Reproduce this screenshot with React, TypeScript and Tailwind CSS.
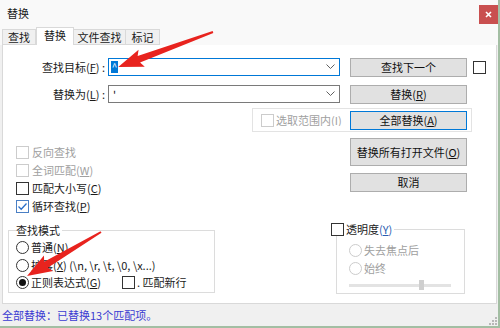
import React from "react";

function Acc({ c }: { c: string }) {
  return (
    <span>
      (<span className="underline">{c}</span>)
    </span>
  );
}

function Check({ checked = false, disabled = false }: { checked?: boolean; disabled?: boolean }) {
  return (
    <span
      className={
        "inline-flex shrink-0 w-[13px] h-[13px] bg-white border items-center justify-center " +
        (disabled ? "border-[#cccccc]" : checked ? "border-[#4a7fc4]" : "border-[#333333]")
      }
    >
      {checked && (
        <svg width="11" height="11" viewBox="0 0 11 11">
          <polyline points="1.5,5.5 4.2,8.2 9.5,2.5" fill="none" stroke="#2a6fc9" strokeWidth="1.3" />
        </svg>
      )}
    </span>
  );
}

function Radio({ on = false, disabled = false }: { on?: boolean; disabled?: boolean }) {
  return (
    <span
      className={
        "inline-flex shrink-0 w-[13px] h-[13px] rounded-full bg-white border items-center justify-center " +
        (disabled ? "border-[#cccccc]" : "border-[#333333]")
      }
    >
      {on && <span className="w-[7px] h-[7px] rounded-full bg-[#111111]" />}
    </span>
  );
}

function Btn({ children, focused = false, tall = false }: { children: React.ReactNode; focused?: boolean; tall?: boolean }) {
  return (
    <div
      className={
        "w-[117px] shrink-0 bg-[#e1e1e1] border flex items-center justify-center text-[#111111] " +
        (tall ? "h-[28px] " : "h-[19px] ") +
        (focused ? "border-[#0078d7]" : "border-[#adadad]")
      }
    >
      {children}
    </div>
  );
}

function Chevron() {
  return (
    <svg width="9" height="6" viewBox="0 0 9 6" className="ml-auto mr-[4px]">
      <polyline points="0.5,0.5 4.5,4.5 8.5,0.5" fill="none" stroke="#606060" strokeWidth="1" />
    </svg>
  );
}

export default function App() {
  return (
    <div className="relative w-[500px] h-[328px] overflow-hidden border-r-2 border-b-2 border-[#a3bea3] bg-[#f0f0f0] flex flex-col font-['Noto_Sans_CJK_SC','Liberation_Sans',sans-serif] text-[11px] text-[#1a1a1a] leading-none">
      {/* title bar */}
      <div className="h-[27px] shrink-0 bg-[#f9f9f9] flex items-start justify-between">
        <span className="ml-[7px] mt-[8px]">替换</span>
        <div className="mt-[5px] w-[19px] h-[19px] bg-[#c94f4f] flex items-center justify-center">
          <svg width="7" height="7" viewBox="0 0 7 7">
            <path d="M1 1 L6 6 M6 1 L1 6" stroke="#ffffff" strokeWidth="1.6" />
          </svg>
        </div>
      </div>

      {/* tabs */}
      <div className="relative z-10 h-[18px] shrink-0 -mb-px bg-[#f9f9f9] flex items-end pl-[2px]">
        <div className="w-[34px] h-[16px] bg-[#f0f0f0] border border-[#d9d9d9] flex items-center justify-center">查找</div>
        <div className="w-[38px] h-[18px] bg-white border-t border-l border-r border-[#d9d9d9] flex items-center justify-center pb-[2px]">替换</div>
        <div className="w-[52px] h-[16px] bg-[#f0f0f0] border border-l-0 border-[#d9d9d9] flex items-center justify-center">文件查找</div>
        <div className="w-[34px] h-[16px] bg-[#f0f0f0] border border-l-0 border-[#d9d9d9] flex items-center justify-center">标记</div>
      </div>

      {/* panel */}
      <div className="ml-[2px] w-[495px] h-[260px] shrink-0 bg-white border border-[#d9d9d9] flex flex-col">
        {/* row 1 */}
        <div className="mt-[12px] h-[20px] flex items-center">
          <div className="w-[102px] text-right whitespace-nowrap">
            查找目标<Acc c="F" /> :
          </div>
          <div className="ml-[3px] w-[232px] h-[18px] bg-white border border-[#0078d7] flex items-center pl-[2px]">
            <span className="w-[7px] h-[12px] bg-[#0078d7] text-white text-[10px] flex items-center justify-center">^</span>
            <Chevron />
          </div>
          <div className="ml-[10px]">
            <Btn>查找下一个</Btn>
          </div>
          <div className="ml-[6px] flex">
            <Check />
          </div>
        </div>

        {/* row 2 */}
        <div className="mt-[7px] h-[20px] flex items-center">
          <div className="w-[102px] text-right whitespace-nowrap">
            替换为<Acc c="L" /> :
          </div>
          <div className="ml-[3px] w-[232px] h-[18px] bg-white border border-[#7a7a7a] flex items-center pl-[4px]">
            <span>'</span>
            <Chevron />
          </div>
          <div className="ml-[10px]">
            <Btn>
              替换<Acc c="R" />
            </Btn>
          </div>
        </div>

        {/* row 3 */}
        <div className="mt-[4px] ml-[249px] w-[220px] h-[24px] border border-[#e3e3e3] flex items-center">
          <span className="ml-[8px] flex">
            <Check disabled />
          </span>
          <span className="ml-[2px] w-[70px] overflow-hidden whitespace-nowrap text-[#a0a0a0]">选取范围内(I)</span>
          <span className="ml-[4px]">
            <Btn focused>
              全部替换<Acc c="A" />
            </Btn>
          </span>
        </div>

        {/* middle */}
        <div className="mt-[6px] flex">
          <div className="ml-[13px] w-[334px] pt-[5px] flex flex-col">
            <div className="h-[18px] flex items-center gap-[3px] text-[#a0a0a0]">
              <Check disabled />
              <span>反向查找</span>
            </div>
            <div className="h-[18px] flex items-center gap-[3px] text-[#a0a0a0]">
              <Check disabled />
              <span>
                全词匹配<Acc c="W" />
              </span>
            </div>
            <div className="h-[18px] flex items-center gap-[3px]">
              <Check />
              <span>
                匹配大小写<Acc c="C" />
              </span>
            </div>
            <div className="h-[18px] flex items-center gap-[3px]">
              <Check checked />
              <span>
                循环查找<Acc c="P" />
              </span>
            </div>
          </div>
          <div className="flex flex-col gap-[7px]">
            <Btn tall>
              替换所有打开文件<Acc c="O" />
            </Btn>
            <Btn>取消</Btn>
          </div>
        </div>

        {/* bottom groups */}
        <div className="mt-[14px] flex items-start">
          <div className="mt-[1px] ml-[5px] w-[207px] h-[63px] border border-[#dcdcdc] flex flex-col">
            <div className="-mt-[6px] ml-[7px] w-fit bg-white pr-[2px] h-[11px]">查找模式</div>
            <div className="mt-[3px] ml-[7px] h-[18px] flex items-center gap-[2px]">
              <Radio />
              <span>
                普通<Acc c="N" />
              </span>
            </div>
            <div className="ml-[7px] h-[18px] flex items-center gap-[2px] whitespace-nowrap">
              <Radio />
              <span>
                扩展<Acc c="X" /> (\n, \r, \t, \0, \x...)
              </span>
            </div>
            <div className="ml-[7px] h-[19px] flex items-center whitespace-nowrap">
              <Radio on />
              <span className="ml-[2px] w-[89px]">
                正则表达式<Acc c="G" />
              </span>
              <span className="ml-[2px] flex">
                <Check />
              </span>
              <span className="ml-[2px]">. 匹配新行</span>
            </div>
          </div>

          <div className="ml-[121px] w-[129px] h-[65px] border border-[#dcdcdc] flex flex-col">
            <div className="-mt-[7px] -ml-[6px] w-fit bg-white pr-[2px] h-[13px] flex items-center gap-[2px]">
              <Check />
              <span>
                透明度<span className="text-[#2a5db0]">(<span className="underline">Y</span>)</span>
              </span>
            </div>
            <div className="mt-[5px] ml-[12px] h-[18px] flex items-center gap-[2px] text-[#a0a0a0]">
              <Radio disabled />
              <span>失去焦点后</span>
            </div>
            <div className="ml-[12px] h-[18px] flex items-center gap-[2px] text-[#a0a0a0]">
              <Radio disabled />
              <span>始终</span>
            </div>
            <div className="ml-[12px] mt-[3px] w-[102px] h-[10px] flex items-center">
              <div className="w-[70px] h-[3px] bg-[#e3e3e3]" />
              <div className="w-[5px] h-[10px] bg-[#cfcfcf]" />
              <div className="flex-1 h-[3px] bg-[#e3e3e3]" />
            </div>
          </div>
        </div>
      </div>

      {/* status bar */}
      <div className="flex-1 flex items-center justify-between pl-[2px]">
        <span className="text-[#3b3bd2]">全部替换：已替换13个匹配项。</span>
        <svg width="8" height="8" viewBox="0 0 8 8" className="self-end mb-[1px] mr-[1px]">
          <rect x="6" y="0" width="2" height="2" fill="#b8b8b8" />
          <rect x="3" y="3" width="2" height="2" fill="#b8b8b8" />
          <rect x="6" y="3" width="2" height="2" fill="#b8b8b8" />
          <rect x="0" y="6" width="2" height="2" fill="#b8b8b8" />
          <rect x="3" y="6" width="2" height="2" fill="#b8b8b8" />
          <rect x="6" y="6" width="2" height="2" fill="#b8b8b8" />
        </svg>
      </div>

      {/* red arrows overlay */}
      <svg className="absolute left-0 top-0 pointer-events-none z-20" width="500" height="328" viewBox="0 0 500 328">
        <g transform="translate(213 32) rotate(159.8)">
          <polygon points="0,-1 79,-3.5 76,-9 101,0 76,9 79,3.5 0,1" fill="#e8231e" />
        </g>
        <g transform="translate(101 232) rotate(149.3)">
          <polygon points="0,-1 64,-3.5 61,-9 86,0 61,9 64,3.5 0,1" fill="#e8231e" />
        </g>
      </svg>
    </div>
  );
}
